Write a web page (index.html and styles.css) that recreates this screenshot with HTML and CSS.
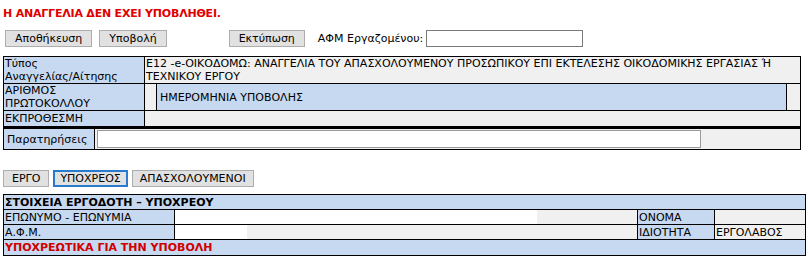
FILE: index.html
```html
<!DOCTYPE html>
<html lang="el">
<head>
<meta charset="utf-8">
<title>Αναγγελία</title>
<link rel="stylesheet" href="styles.css">
</head>
<body>
<div class="page">
  <div class="status">Η ΑΝΑΓΓΕΛΙΑ ΔΕΝ ΕΧΕΙ ΥΠΟΒΛΗΘΕΙ.</div>
  <div class="toolbar">
    <button class="btn btn-save">Αποθήκευση</button>
    <button class="btn btn-submit">Υποβολή</button>
    <button class="btn btn-print">Εκτύπωση</button>
    <label class="afm-label">ΑΦΜ Εργαζομένου:</label>
    <input class="afm-input" type="text">
  </div>
  <table class="info">
    <tr>
      <td class="lbl w-lbl">Τύπος<br>Αναγγελίας/Αίτησης</td>
      <td class="val" colspan="3">Ε12 -e-ΟΙΚΟΔΟΜΩ: ΑΝΑΓΓΕΛΙΑ ΤΟΥ ΑΠΑΣΧΟΛΟΥΜΕΝΟΥ ΠΡΟΣΩΠΙΚΟΥ ΕΠΙ ΕΚΤΕΛΕΣΗΣ ΟΙΚΟΔΟΜΙΚΗΣ ΕΡΓΑΣΙΑΣ Ή ΤΕΧΝΙΚΟΥ ΕΡΓΟΥ</td>
    </tr>
    <tr>
      <td class="lbl">ΑΡΙΘΜΟΣ ΠΡΩΤΟΚΟΛΛΟΥ</td>
      <td class="val narrow"></td>
      <td class="lbl date">ΗΜΕΡΟΜΗΝΙΑ ΥΠΟΒΟΛΗΣ</td>
      <td class="val end"></td>
    </tr>
    <tr class="late">
      <td class="lbl">ΕΚΠΡΟΘΕΣΜΗ</td>
      <td class="val" colspan="3"></td>
    </tr>
  </table>
  <table class="notes">
    <tr>
      <td class="lbl notes-lbl">Παρατηρήσεις</td>
      <td class="val notes-val"><input class="notes-input" type="text"></td>
    </tr>
  </table>
  <div class="tabs">
    <button class="tab">ΕΡΓΟ</button>
    <button class="tab active">ΥΠΟΧΡΕΟΣ</button>
    <button class="tab">ΑΠΑΣΧΟΛΟΥΜΕΝΟΙ</button>
  </div>
  <table class="employer">
    <tr>
      <td class="lbl head" colspan="4">ΣΤΟΙΧΕΙΑ ΕΡΓΟΔΟΤΗ – ΥΠΟΧΡΕΟΥ</td>
    </tr>
    <tr>
      <td class="lbl emp-lbl">ΕΠΩΝΥΜΟ - ΕΠΩΝΥΜΙΑ</td>
      <td class="val emp-val"><span class="fill fill-name"></span></td>
      <td class="lbl emp-lbl2">ΟΝΟΜΑ</td>
      <td class="val"></td>
    </tr>
    <tr>
      <td class="lbl">Α.Φ.Μ.</td>
      <td class="val emp-val"><span class="fill fill-afm"></span></td>
      <td class="lbl">ΙΔΙΟΤΗΤΑ</td>
      <td class="val">ΕΡΓΟΛΑΒΟΣ</td>
    </tr>
    <tr>
      <td class="lbl req" colspan="4">ΥΠΟΧΡΕΩΤΙΚΑ ΓΙΑ ΤΗΝ ΥΠΟΒΟΛΗ</td>
    </tr>
  </table>
</div>
</body>
</html>
```

FILE: styles.css
```css
html, body {
  margin: 0;
  padding: 0;
  background: #ffffff;
}
body {
  font-family: "DejaVu Sans", Verdana, sans-serif;
  font-size: 11px;
  color: #000;
}
.page {
  padding: 0 3px;
}
.status {
  color: #e00000;
  font-weight: bold;
  font-size: 11px;
  letter-spacing: -0.2px;
  padding-top: 7px;
  line-height: 13px;
}
.toolbar {
  display: flex;
  align-items: center;
  margin-top: 9px;
  height: 18px;
}
.btn {
  font-family: "DejaVu Sans", Verdana, sans-serif;
  font-size: 11px;
  background: #e1e1e1;
  border: 1px solid #adadad;
  height: 17px;
  padding: 0 9px;
  color: #000;
  line-height: 13px;
}
.btn-save { margin-left: 2px; }
.btn-submit { margin-left: 7px; }
.btn-print { margin-left: 62px; }
.afm-label {
  margin-left: 13px;
}
.afm-input {
  margin-left: 3px;
  width: 155px;
  height: 15px;
  border: 1px solid #7a7a7a;
  padding: 0;
}
table {
  border-collapse: collapse;
  font-size: 11px;
}
td {
  border: 1px solid #000;
  padding: 0 1px;
  line-height: 13px;
  vertical-align: middle;
}
.lbl { background: #c6d9f1; }
.val { background: #f0f0f0; }
.info {
  width: 798px;
  margin-top: 9px;
}
.info .w-lbl { width: 138px; }
.info .narrow { width: 9px; }
.info .date { padding-left: 3px; }
.info .end { width: 11px; }
.info tr:nth-child(2) td { height: 26px; }
.info .late td { height: 15px; }
.notes {
  width: 798px;
  border-top: 2px solid #000;
}
.notes td { height: 20px; }
.notes-lbl { width: 86px; padding-left: 3px; }
.notes-val { padding-left: 2px; }
.notes-input {
  display: block;
  width: 602px;
  height: 16px;
  border: 1px solid #9a9a9a;
  background: #fff;
  padding: 0;
}
.tabs {
  display: flex;
  gap: 4px;
  margin-top: 20px;
}
.tab {
  font-family: "DejaVu Sans", Verdana, sans-serif;
  font-size: 11px;
  background: #e1e1e1;
  border: 1px solid #adadad;
  height: 17px;
  padding: 0 7px;
  line-height: 13px;
  color: #000;
}
.tab:first-child { padding: 0 8px; }
.tab.active {
  border: 2px solid #2a7ad0;
  padding: 0 5px;
}
.employer {
  width: 803px;
  margin-top: 7px;
}
.employer .head { font-weight: bold; height: 14px; }
.employer .emp-lbl { width: 168px; }
.employer .emp-lbl2 { width: 74px; }
.employer .emp-val { width: 462px; padding: 0; }
.fill {
  display: block;
  background: #fff;
  height: 14px;
}
.fill-name { width: 362px; }
.fill-afm { width: 72px; }
.employer .req {
  color: #d00000;
  font-weight: bold;
  height: 15px;
}
```
